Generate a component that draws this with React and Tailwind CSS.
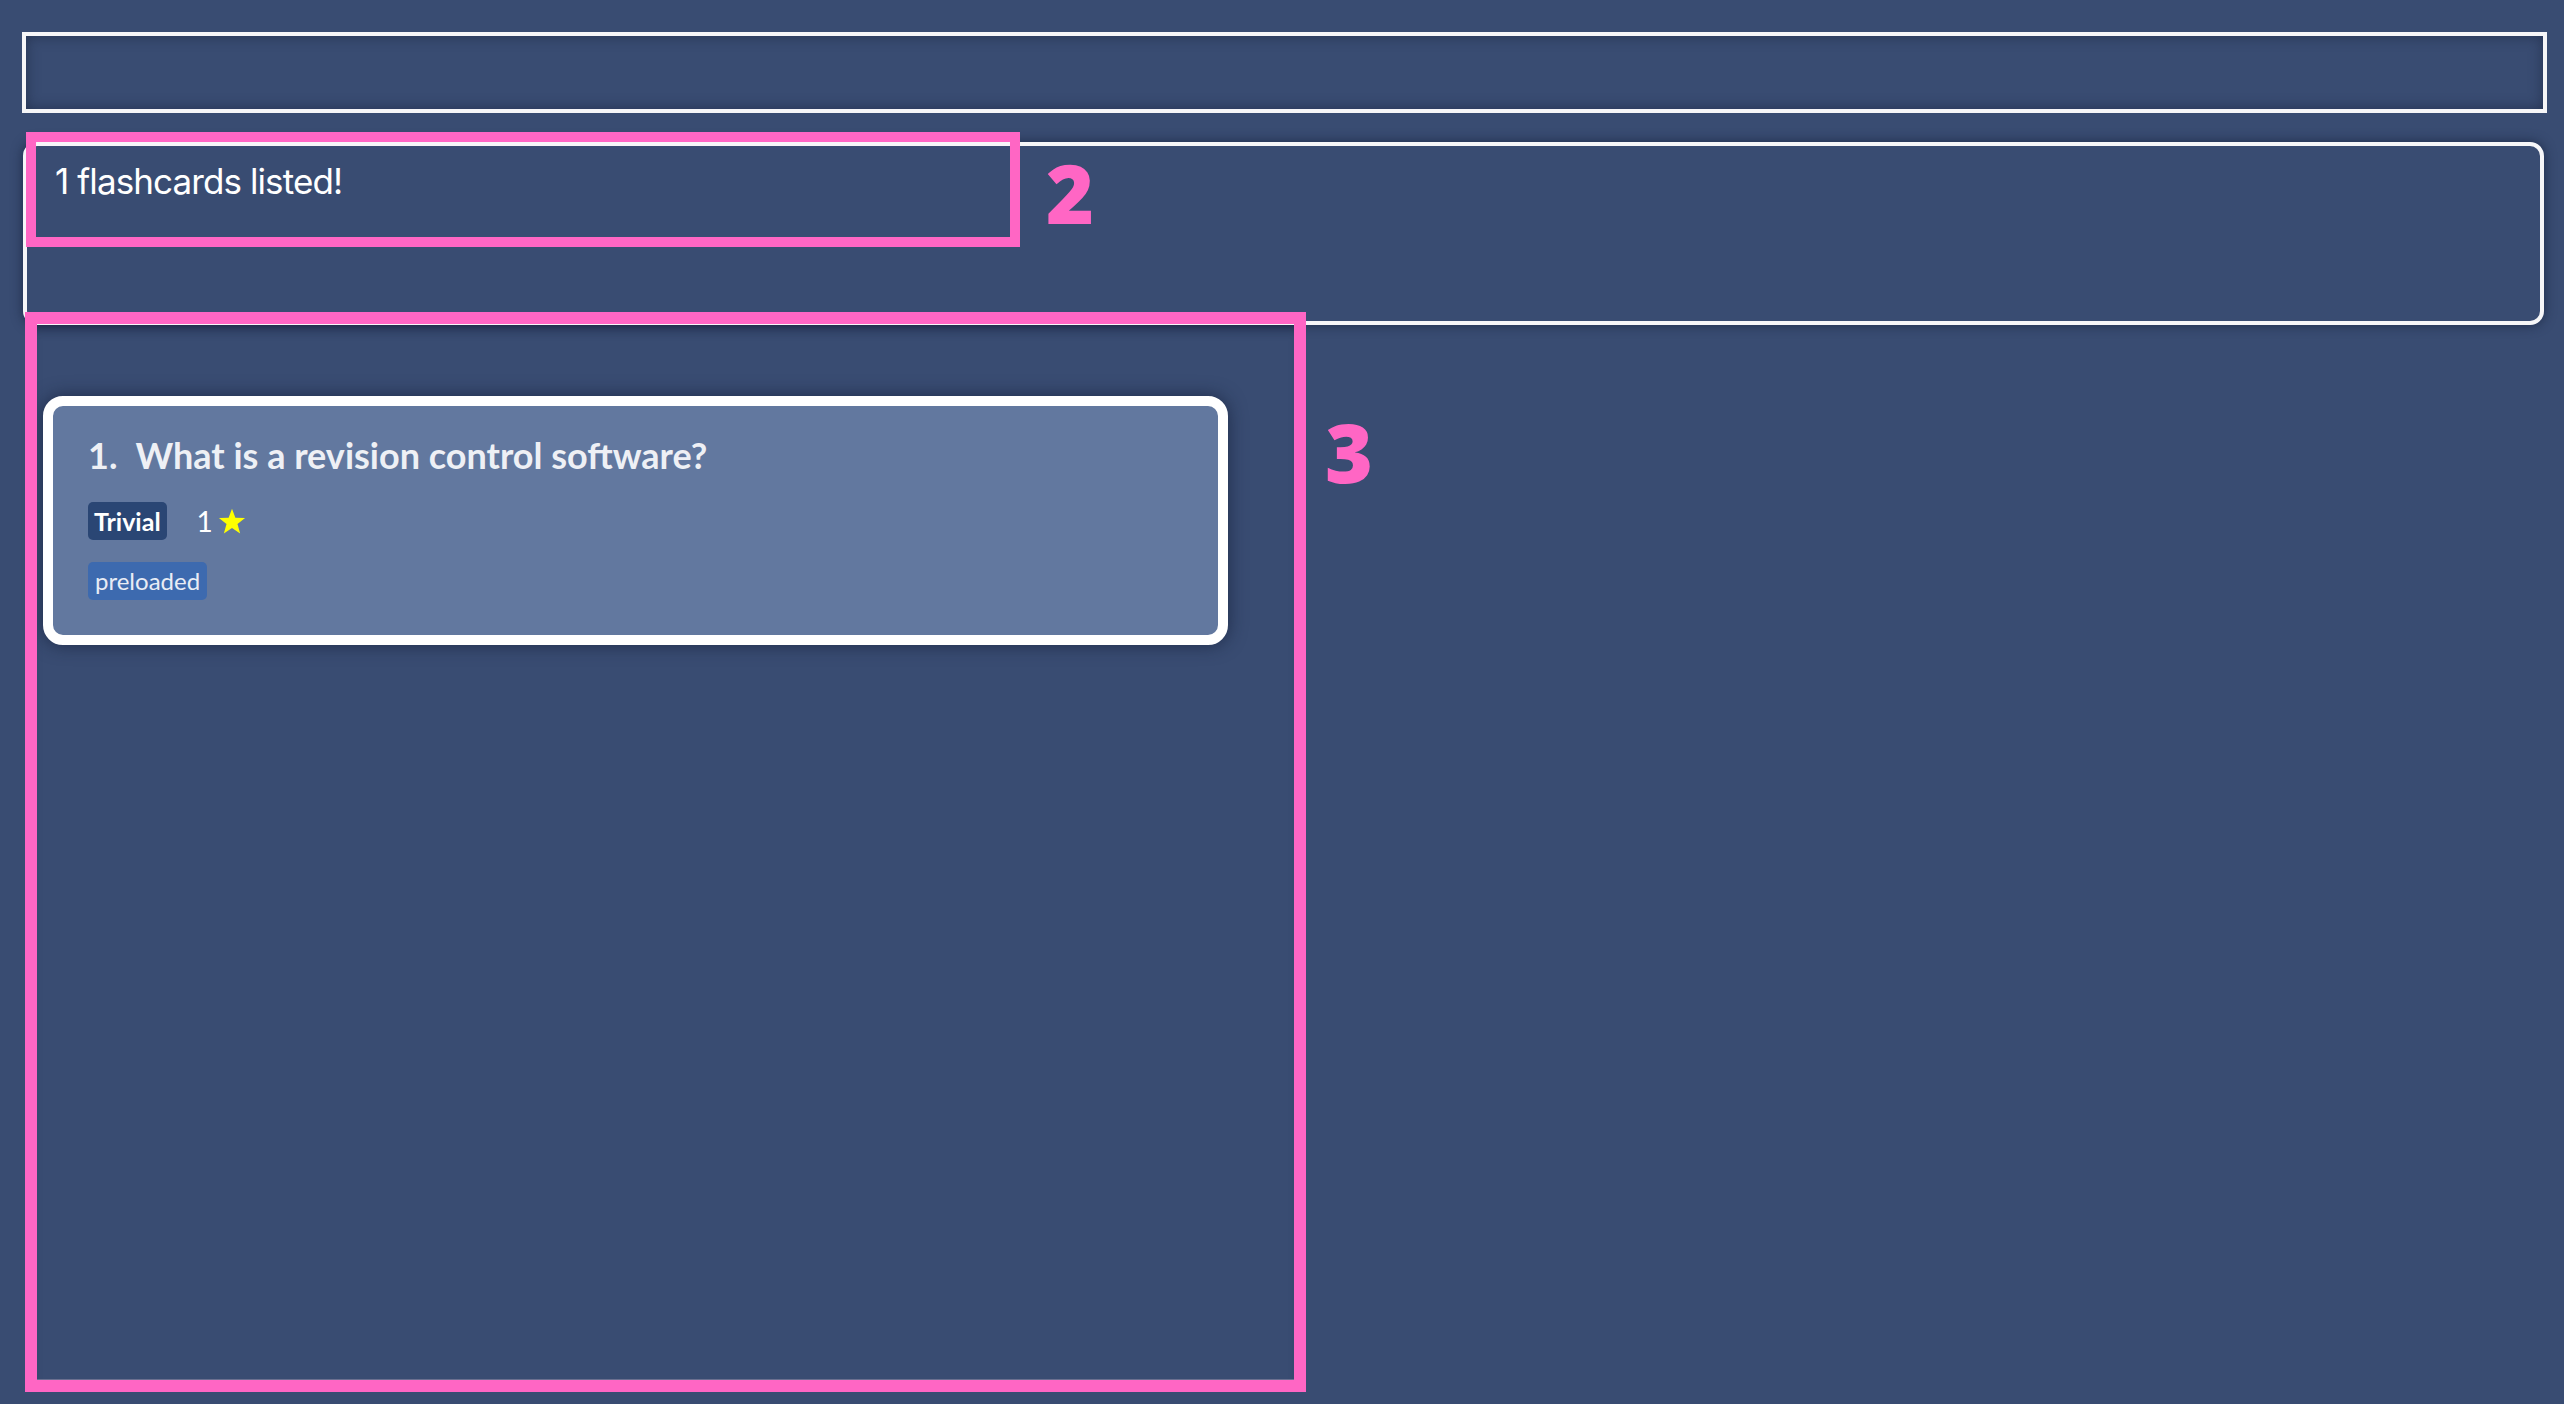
import { useState } from "react";

const cards = [
  {
    question: "What is a revision control software?",
    difficulty: "Trivial",
    stars: 1,
    tags: ["preloaded"],
  },
];

function Star() {
  return (
    <svg width="28" height="27" viewBox="0 0 24 23" className="block">
      <polygon
        fill="#ffff00"
        points="12,0.5 14.9,8.2 23.2,8.5 16.7,13.6 19,21.8 12,17.1 5,21.8 7.3,13.6 0.8,8.5 9.1,8.2"
      />
    </svg>
  );
}

function FlashcardCard({ index, card }) {
  return (
    <div className="w-[1185px] rounded-[20px] border-[10px] border-white bg-[#62789f] shadow-[0_0_18px_rgba(20,30,55,0.7)] pl-[35px] pt-[27px] pb-[35px]">
      <h2 className="flex gap-[18px] text-[36px] leading-[44px] font-bold text-[#eef0f5] font-['Lato',sans-serif]">
        <span>{index}.</span>
        <span>{card.question}</span>
      </h2>
      <div className="mt-[25px] flex items-center gap-[30px]">
        <span className="h-[38px] px-[6px] rounded-[5px] bg-[#2a4674] text-white text-[25px] font-bold leading-[38px] font-['Lato',sans-serif]">
          {card.difficulty}
        </span>
        <span className="flex items-center gap-[5px] text-white text-[28px] leading-none font-['Lato',sans-serif]">
          {card.stars}
          <Star />
        </span>
      </div>
      <div className="mt-[22px] flex gap-2">
        {card.tags.map((tag) => (
          <span
            key={tag}
            className="h-[38px] px-[7px] rounded-[5px] bg-[#3d6aaf] text-[#e8ecf5] text-[24px] leading-[38px] font-['Lato',sans-serif]"
          >
            {tag}
          </span>
        ))}
      </div>
    </div>
  );
}

export default function App() {
  const [command, setCommand] = useState("");

  return (
    <div className="relative h-[1404px] w-full overflow-hidden bg-[#394c72]">
      <div className="flex flex-col pt-[32px] pl-[22px] pr-[17px]">
        <div className="h-[81px] border-4 border-[#f6f6f8] shadow-[inset_0_0_14px_rgba(25,35,60,0.6)]">
          <input
            value={command}
            onChange={(e) => setCommand(e.target.value)}
            className="w-full h-full bg-transparent outline-none text-white px-4"
          />
        </div>

        <div className="mt-[29px] mr-[3px] ml-[1px] h-[183px] rounded-[14px] border-[4px] border-[#f6f6f8] shadow-[0_0_12px_rgba(20,30,55,0.7)] pl-[28px] pt-[13px]">
          <p className="text-[35px] leading-[44px] text-white font-['Inter',sans-serif] tracking-[-0.9px]">
            1 flashcards listed!
          </p>
        </div>

        <div className="ml-[15px] w-[1257px] h-[1055px] border-b border-[#6b7090] shadow-[inset_0_10px_12px_-8px_rgba(20,30,55,0.6)] pl-[6px] pt-[71px]">
          {cards.map((card, i) => (
            <FlashcardCard key={i} index={i + 1} card={card} />
          ))}
        </div>
      </div>

      {/* annotation overlays */}
      <div className="absolute left-[26px] top-[132px] w-[994px] h-[115px] border-[10px] border-[#ff66c4]" />
      <span className="absolute left-[1046px] top-[132px] text-[82px] leading-[120px] font-extrabold text-[#ff66c4] font-['Open_Sans',sans-serif]">
        2
      </span>
      <div className="absolute left-[25px] top-[312px] w-[1281px] h-[1080px] border-[12px] border-[#ff66c4]" />
      <span className="absolute left-[1325px] top-[391px] text-[82px] leading-[120px] font-extrabold text-[#ff66c4] font-['Open_Sans',sans-serif]">
        3
      </span>
    </div>
  );
}
